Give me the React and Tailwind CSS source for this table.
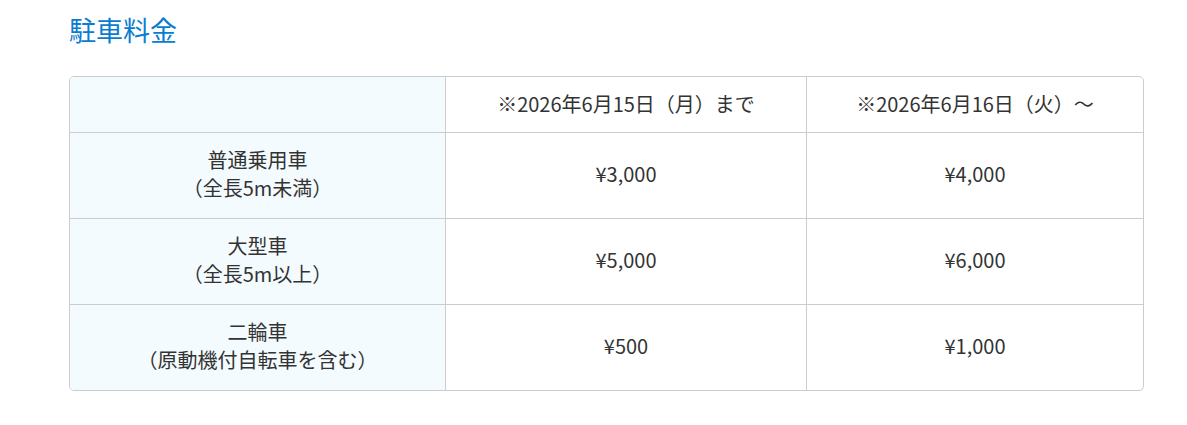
import React from "react";

const font = { fontFamily: '"Noto Sans CJK JP", "Noto Sans", sans-serif' };

const rows = [
  { label: ["普通乗用車", "（全長5m未満）"], a: "¥3,000", b: "¥4,000" },
  { label: ["大型車", "（全長5m以上）"], a: "¥5,000", b: "¥6,000" },
  { label: ["二輪車", "（原動機付自転車を含む）"], a: "¥500", b: "¥1,000" },
];

export default function App() {
  return (
    <div className="bg-white w-[1187px] h-[425px] pl-[69px] pt-[10px] text-[#333333]" style={font}>
      <h2 className="text-[27px] leading-[39px] text-[#0a7cd2] font-normal">駐車料金</h2>
      <div className="mt-[27px] w-[1075px] border border-[#cccccc] rounded-[5px] overflow-hidden">
        <div className="grid grid-cols-[376px_361px_336px] text-[20px] leading-[28px]">
          <div className="h-[56px] bg-[#f3fbfe] border-r border-b border-[#cccccc]"></div>
          <div className="h-[56px] pb-[2px] border-r border-b border-[#cccccc] flex items-center justify-center">※2026年6月15日（月）まで</div>
          <div className="h-[56px] pb-[2px] border-b border-[#cccccc] flex items-center justify-center">※2026年6月16日（火）～</div>
          {rows.map((r, i) => {
            const last = i === rows.length - 1;
            const h = last ? "h-[85px]" : "h-[86px] border-b";
            return (
              <React.Fragment key={i}>
                <div className={`${h} pb-[3px] bg-[#f3fbfe] border-r border-[#cccccc] flex flex-col items-center justify-center text-center`}>
                  <div>{r.label[0]}</div>
                  <div>{r.label[1]}</div>
                </div>
                <div className={`${h} pb-[3px] border-r border-[#cccccc] flex items-center justify-center`}>{r.a}</div>
                <div className={`${h} pb-[3px] border-[#cccccc] flex items-center justify-center`}>{r.b}</div>
              </React.Fragment>
            );
          })}
        </div>
      </div>
    </div>
  );
}
